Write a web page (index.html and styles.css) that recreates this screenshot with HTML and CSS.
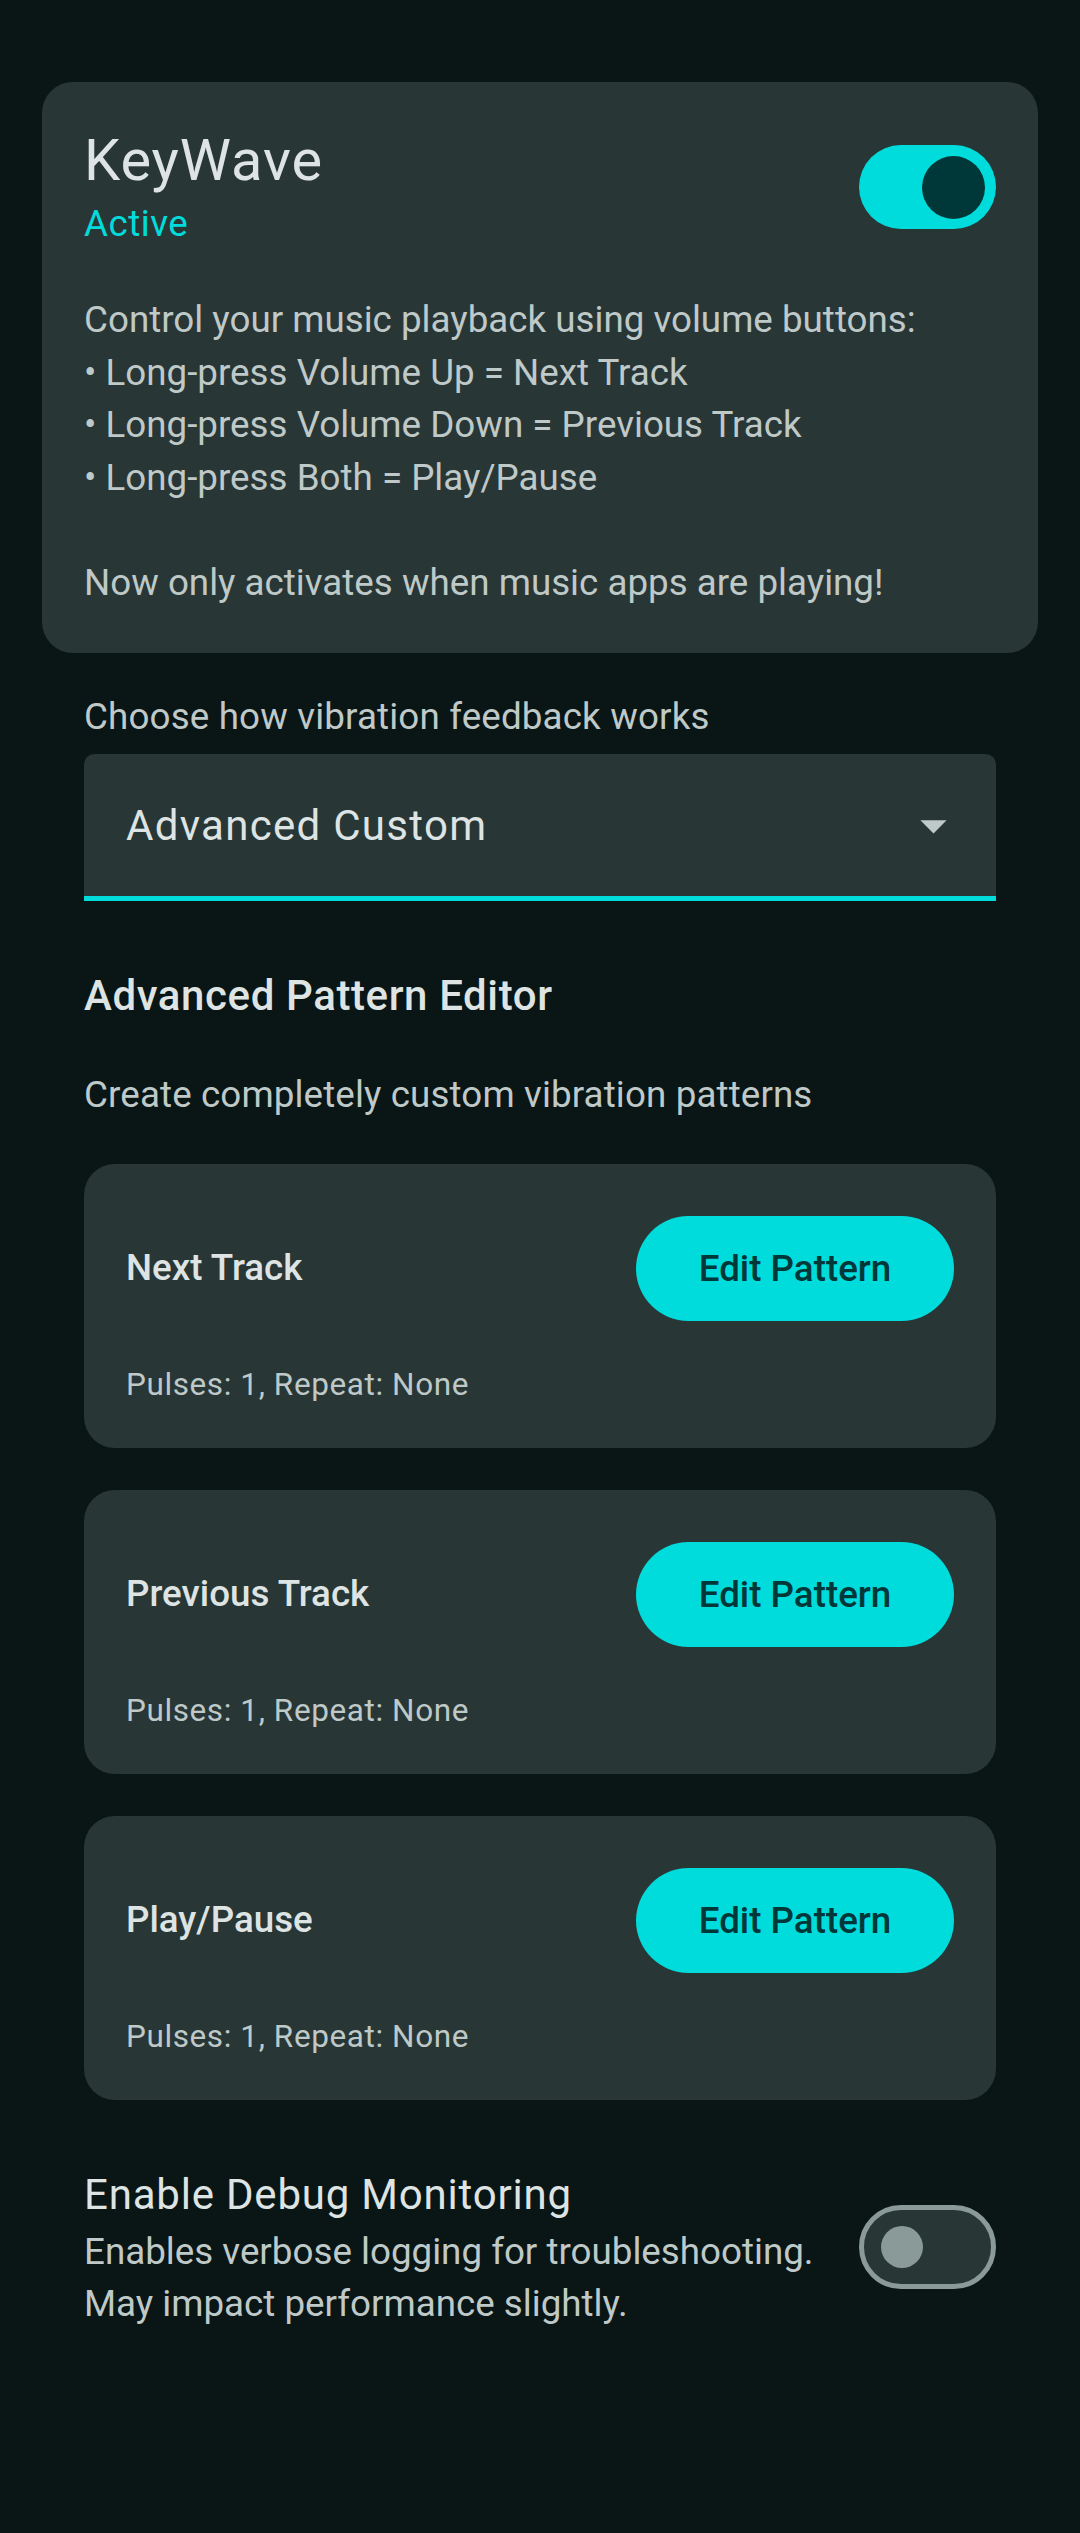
FILE: index.html
```html
<!DOCTYPE html>
<html lang="en">
<head>
<meta charset="utf-8">
<title>KeyWave</title>
<link rel="stylesheet" href="styles.css">
</head>
<body>
<main class="page">
  <section class="hero-card">
    <div class="hero-head">
      <div class="hero-titles">
        <div class="hero-title">KeyWave</div>
        <div class="hero-status">Active</div>
      </div>
      <div class="switch switch-on"><span class="switch-thumb"></span></div>
    </div>
    <p class="hero-desc">Control your music playback using volume buttons:<br>• Long-press Volume Up = Next Track<br>• Long-press Volume Down = Previous Track<br>• Long-press Both = Play/Pause<br><br>Now only activates when music apps are playing!</p>
  </section>

  <section class="settings">
    <div class="field-label">Choose how vibration feedback works</div>
    <div class="dropdown">
      <span class="dropdown-value">Advanced Custom</span>
      <svg class="dropdown-arrow" viewBox="0 0 24 24" width="63" height="63"><path d="M7 10l5 5 5-5z" fill="#bec9c8"/></svg>
    </div>

    <h2 class="section-title">Advanced Pattern Editor</h2>
    <p class="section-sub">Create completely custom vibration patterns</p>

    <div class="pattern-list">
      <div class="pattern-card">
        <div class="pattern-row">
          <span class="pattern-name">Next Track</span>
          <button class="edit-btn">Edit Pattern</button>
        </div>
        <div class="pattern-meta">Pulses: 1, Repeat: None</div>
      </div>
      <div class="pattern-card">
        <div class="pattern-row">
          <span class="pattern-name">Previous Track</span>
          <button class="edit-btn">Edit Pattern</button>
        </div>
        <div class="pattern-meta">Pulses: 1, Repeat: None</div>
      </div>
      <div class="pattern-card">
        <div class="pattern-row">
          <span class="pattern-name">Play/Pause</span>
          <button class="edit-btn">Edit Pattern</button>
        </div>
        <div class="pattern-meta">Pulses: 1, Repeat: None</div>
      </div>
    </div>

    <div class="debug-row">
      <div class="debug-text">
        <div class="debug-title">Enable Debug Monitoring</div>
        <div class="debug-desc">Enables verbose logging for troubleshooting.<br>May impact performance slightly.</div>
      </div>
      <div class="switch switch-off"><span class="switch-thumb"></span></div>
    </div>
  </section>
</main>
</body>
</html>
```

FILE: styles.css
```css
* { box-sizing: border-box; }

html, body {
  margin: 0;
  padding: 0;
  background: #0a1515;
}

body {
  font-family: Roboto, "Noto Sans", "Liberation Sans", sans-serif;
  color: #dde4e3;
  min-height: 2533px;
}

.page {
  padding: 82px 42px 0;
}

.hero-card {
  background: #293636;
  border-radius: 31px;
  padding: 42px 42px 44px;
}

.hero-head {
  display: flex;
  align-items: center;
  justify-content: space-between;
}

.hero-title {
  font-size: 57.75px;
  line-height: 73.5px;
  letter-spacing: 0.9px;
  color: #dde4e3;
}

.hero-status {
  font-size: 36.75px;
  line-height: 52.5px;
  letter-spacing: 0.5px;
  color: #00dcdc;
}

.hero-desc {
  margin: 44px 0 0;
  font-size: 36.75px;
  line-height: 52.5px;
  color: #bec9c8;
}

.switch {
  width: 137px;
  height: 84px;
  border-radius: 42px;
  display: flex;
  align-items: center;
  flex-shrink: 0;
}

.switch-on {
  background: #00dcdc;
  justify-content: flex-end;
  padding-right: 11px;
}

.switch-on .switch-thumb {
  width: 63px;
  height: 63px;
  border-radius: 50%;
  background: #003738;
}

.switch-off {
  background: #293636;
  border: 5.25px solid #8a9a99;
  justify-content: flex-start;
  padding-left: 16.75px;
}

.switch-off .switch-thumb {
  width: 42px;
  height: 42px;
  border-radius: 50%;
  background: #8a9a99;
}

.settings {
  padding: 0 42px;
}

.field-label {
  margin-top: 38px;
  font-size: 36.75px;
  line-height: 52.5px;
  letter-spacing: 0.15px;
  color: #bec9c8;
}

.dropdown {
  margin-top: 10.5px;
  height: 147px;
  background: #293636;
  border-radius: 10.5px 10.5px 0 0;
  border-bottom: 5.25px solid #00dcdc;
  display: flex;
  align-items: center;
  justify-content: space-between;
  padding: 0 31.5px 0 42px;
}

.dropdown-value {
  font-size: 42px;
  line-height: 63px;
  color: #dde4e3;
  letter-spacing: 1.3px;
}

.dropdown-arrow {
  display: block;
}

.section-title {
  margin: 63px 0 0;
  font-size: 42px;
  line-height: 63px;
  font-weight: 500;
  letter-spacing: 0.6px;
  color: #dde4e3;
}

.section-sub {
  margin: 42px 0 0;
  font-size: 36.75px;
  line-height: 52.5px;
  letter-spacing: 0.12px;
  color: #bec9c8;
}

.pattern-list {
  margin-top: 42px;
  display: flex;
  flex-direction: column;
  gap: 42px;
}

.pattern-card {
  background: #293636;
  border-radius: 31px;
  padding: 42px;
}

.pattern-row {
  height: 126px;
  display: flex;
  align-items: center;
  justify-content: space-between;
}

.pattern-name {
  font-size: 36.75px;
  line-height: 52.5px;
  font-weight: 500;
  color: #dde4e3;
}

.edit-btn {
  height: 105px;
  width: 318px;
  border: none;
  border-radius: 52.5px;
  background: #00dcdc;
  color: #003738;
  font-family: inherit;
  font-size: 36.75px;
  font-weight: 500;
  padding: 0;
}

.pattern-meta {
  margin-top: 32px;
  font-size: 31.5px;
  line-height: 42px;
  letter-spacing: 0.6px;
  color: #bec9c8;
}

.debug-row {
  margin-top: 63px;
  display: flex;
  align-items: center;
  gap: 42px;
}

.debug-text {
  flex: 1;
}

.debug-title {
  font-size: 42px;
  line-height: 63px;
  letter-spacing: 0.8px;
  color: #dde4e3;
}

.debug-desc {
  font-size: 36.75px;
  line-height: 52.5px;
  color: #bec9c8;
}
```
